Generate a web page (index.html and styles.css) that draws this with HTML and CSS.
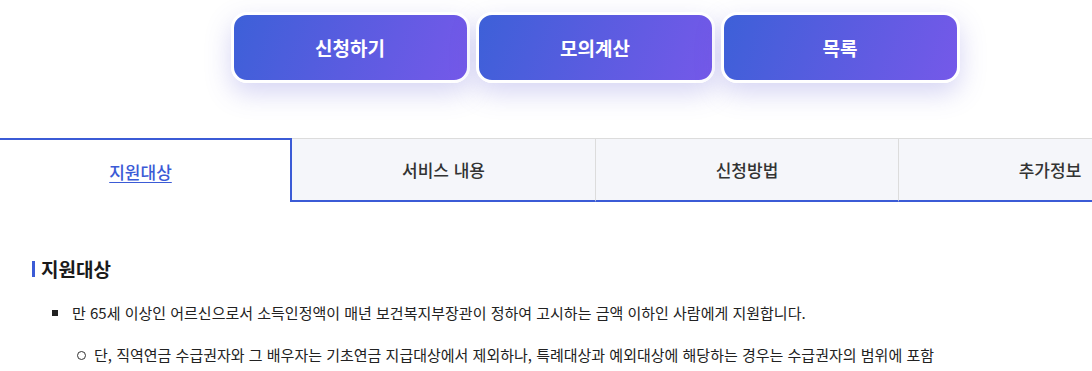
FILE: index.html
```html
<!DOCTYPE html>
<html lang="ko">
<head>
  <meta charset="UTF-8" />
  <meta name="viewport" content="width=device-width, initial-scale=1.0"/>
  <title>기초연금</title>
  <link rel="stylesheet" href="styles.css">
</head>
<body>
  <div class="wrap">
    <div class="actions">
      <a class="action-btn">신청하기</a>
      <a class="action-btn">모의계산</a>
      <a class="action-btn">목록</a>
    </div>

    <ul class="tabs">
      <li class="tab active"><a>지원대상</a></li>
      <li class="tab"><a>서비스 내용</a></li>
      <li class="tab"><a>신청방법</a></li>
      <li class="tab"><a>추가정보</a></li>
    </ul>

    <div class="content">
      <h3 class="section-title">지원대상</h3>
      <ul class="dot-list">
        <li>만 65세 이상인 어르신으로서 소득인정액이 매년 보건복지부장관이 정하여 고시하는 금액 이하인 사람에게 지원합니다.</li>
      </ul>
      <ul class="circle-list">
        <li>단, 직역연금 수급권자와 그 배우자는 기초연금 지급대상에서 제외하나, 특례대상과 예외대상에 해당하는 경우는 수급권자의 범위에 포함</li>
      </ul>
    </div>
  </div>
</body>
</html>
```

FILE: styles.css
```css
* {
  margin: 0;
  padding: 0;
  box-sizing: border-box;
}

body {
  font-family: "Noto Sans CJK KR", "Noto Sans", sans-serif;
  color: #222;
  background: #fff;
  overflow: hidden;
}

.wrap {
  width: 1212px;
  margin-left: -11px;
}

.actions {
  display: flex;
  justify-content: center;
  gap: 6px;
  padding-top: 12px;
}

.action-btn {
  display: flex;
  align-items: center;
  justify-content: center;
  width: 239px;
  height: 71px;
  border: 3px solid #fff;
  border-radius: 16px;
  background: linear-gradient(110deg, #3d60d8 0%, #5a5ce0 50%, #7559e9 100%);
  box-shadow: 0 10px 26px rgba(92, 86, 210, 0.25);
  color: #fff;
  font-size: 19px;
  font-weight: 700;
}

.tabs {
  display: flex;
  list-style: none;
  margin-top: 55px;
}

.tab {
  width: 25%;
  height: 64px;
  display: flex;
  align-items: center;
  justify-content: center;
  background: #f5f6fa;
  border-top: 1px solid #dcdcdc;
  border-left: 1px solid #dcdcdc;
  border-bottom: 2px solid #3b5bd6;
  color: #333;
  font-size: 17px;
  font-weight: 500;
}

.tab.active {
  background: #fff;
  border: 2px solid #3b5bd6;
  border-bottom: none;
  color: #3b5bd6;
}

.tab.active a {
  text-decoration: underline;
  text-underline-offset: 3px;
}

.tab.active + .tab {
  border-left: none;
}

.content {
  padding: 54px 0 0 43px;
}

.section-title {
  display: flex;
  align-items: center;
  gap: 6px;
  font-size: 19px;
  font-weight: 700;
  line-height: 26px;
  color: #1a1a1a;
}

.section-title::before {
  content: "";
  width: 3px;
  height: 16px;
  background: #3b5bd6;
}

.dot-list,
.circle-list {
  list-style: none;
  font-size: 15px;
  line-height: 22px;
  color: #222;
}

.dot-list {
  margin-top: 20px;
  padding-left: 20px;
}

.circle-list {
  margin-top: 20px;
  padding-left: 45px;
}

.dot-list li,
.circle-list li {
  display: flex;
  align-items: center;
}

.dot-list li::before {
  content: "";
  flex: none;
  width: 6px;
  height: 6px;
  margin-right: 14px;
  background: #222;
}

.circle-list li::before {
  content: "";
  flex: none;
  width: 7px;
  height: 7px;
  margin-right: 8px;
  border: 1px solid #333;
  border-radius: 50%;
}
```
